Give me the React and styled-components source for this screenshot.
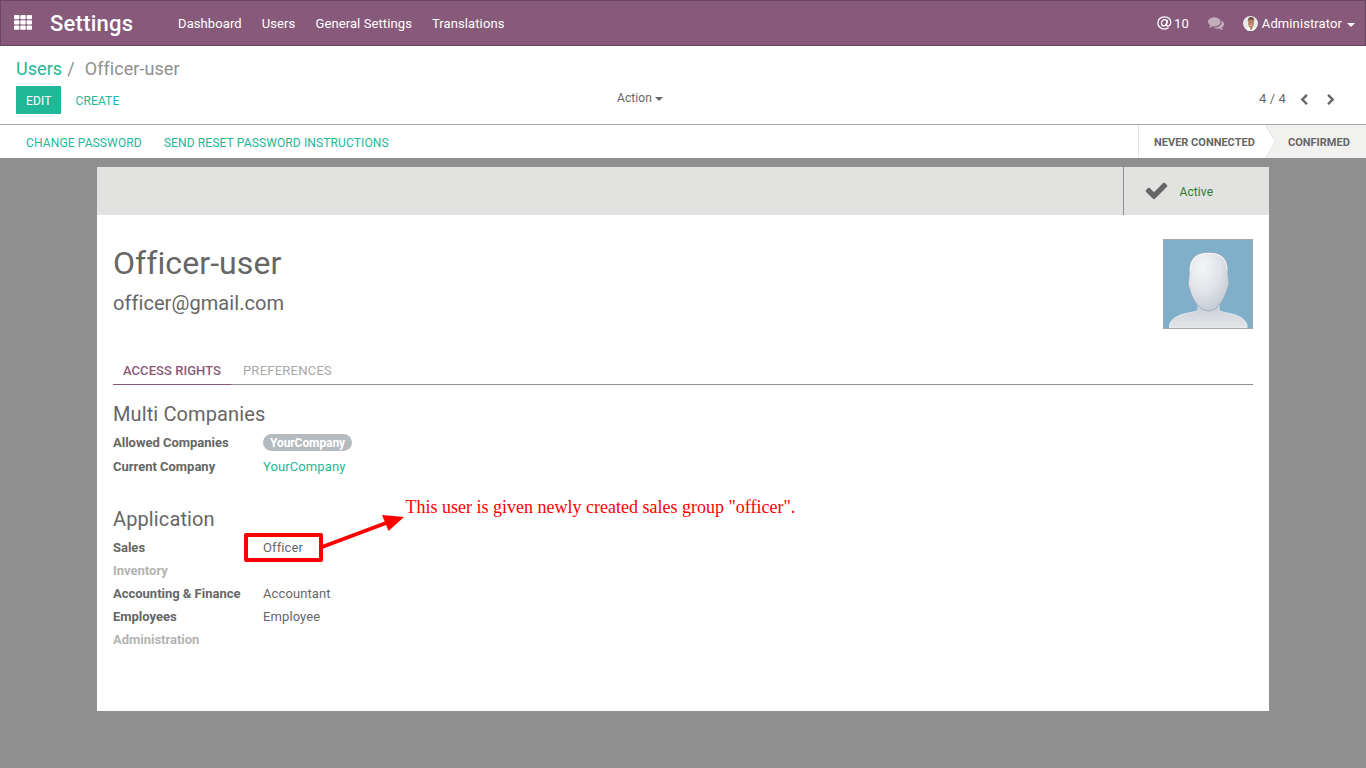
import React from "react";
import styled, { createGlobalStyle } from "styled-components";

const GlobalStyle = createGlobalStyle`
  * { box-sizing: border-box; }
  body {
    margin: 0;
    background: #8f8f8f;
    color: #666;
    font-family: Roboto, "Liberation Sans", sans-serif;
    font-size: 13px;
    line-height: 20px;
    letter-spacing: 0.1px;
    font-variant-ligatures: none;
    overflow: hidden;
  }
  svg { display: block; flex: none; }
`;

const Page = styled.div`
  height: 768px;
  display: flex;
  flex-direction: column;
`;

const Navbar = styled.header`
  height: 46px;
  flex: none;
  display: flex;
  align-items: center;
  justify-content: space-between;
  padding: 1px 10px 0 13px;
  background: #875a7b;
  border: 1px solid #68465f;
  color: #fff;
`;

const NavGroup = styled.nav`
  display: flex;
  align-items: center;
  gap: ${(p) => p.$gap}px;
`;

const IconSlot = styled.div`
  margin-bottom: ${(p) => p.$lift}px;
`;

const AppName = styled.div`
  width: 108px;
  margin-left: -2px;
  font-size: 22px;
  font-weight: 500;
  letter-spacing: 0.25px;
`;

const Caret = styled.span`
  border: 4px solid transparent;
  border-top-color: currentColor;
  border-bottom: 0;
  margin-top: ${(p) => p.$drop}px;
`;

const NavItem = styled.div`
  display: flex;
  align-items: center;
  gap: ${(p) => p.$gap || 0}px;
`;

const AccountName = styled.span`
  margin-right: 1px;
`;

const ControlPanel = styled.section`
  height: 79px;
  flex: none;
  display: grid;
  grid-template-columns: 601px 1fr auto;
  padding: 11px 29px 0 16px;
  background: #fff;
  border-bottom: 1px solid #a8a8a8;
`;

const Breadcrumb = styled.div`
  display: flex;
  font-size: 18px;
  line-height: 24px;
  letter-spacing: 0.06px;
  color: #8f8f8f;
`;

const Crumb = styled.a`
  color: #21b799;
  margin-right: 5px;
`;

const Separator = styled.span`
  margin-right: 10px;
`;

const Actions = styled.div`
  display: flex;
  gap: 4px;
  margin-top: 5px;
`;

const Button = styled.button`
  height: 28px;
  padding: 2px 10px 0;
  border: 0;
  font: 400 12px/20px Roboto, sans-serif;
  letter-spacing: 0.13px;
  color: ${(p) => (p.$primary ? "#fff" : "#21b799")};
  background: ${(p) => (p.$primary ? "#21b799" : "transparent")};
`;

const PanelItem = styled.div`
  height: 20px;
  margin-top: ${(p) => p.$top}px;
  font-size: ${(p) => p.$size || 13}px;
  display: flex;
  align-items: center;
  gap: ${(p) => p.$gap}px;
`;

const PagerArrows = styled.div`
  display: flex;
  gap: 15px;
  margin-top: 1px;
`;

const StatusBar = styled.section`
  height: 33px;
  flex: none;
  display: flex;
  justify-content: space-between;
  padding-left: 16px;
  background: #fff;
`;

const StatusButtons = styled.div`
  display: flex;
  gap: 2px;
  align-items: center;
`;

const Steps = styled.div`
  display: flex;
  border-left: 1px solid #e2e2e0;
  font-size: 11px;
  font-weight: 700;
  line-height: 35px;
  letter-spacing: 0;
`;

const Step = styled.div`
  display: flex;
  width: ${(p) => p.$width}px;
  padding-left: ${(p) => p.$indent}px;
  background: ${(p) => (p.$current ? "#f1f1f0" : "#fff")};
`;

const Sheet = styled.main`
  width: 1172px;
  height: 544px;
  margin: 9px 0 0 97px;
  background: #fff;
`;

const ButtonBox = styled.div`
  height: 48px;
  display: flex;
  justify-content: flex-end;
  background: #e2e2e0;
`;

const StatButton = styled.div`
  width: 146px;
  border-left: 1px solid #8f8f8f;
  padding-left: 19.5px;
  display: flex;
  align-items: center;
  gap: 11px;
  font-size: 12px;
  color: #2d7a2f;
`;

const StatText = styled.span`
  margin-top: 1px;
`;

const SheetBody = styled.div`
  padding: 24px 16px 0;
`;

const Identity = styled.div`
  height: 122px;
  display: flex;
  justify-content: space-between;
`;

const UserName = styled.h1`
  margin: 3px 0 0;
  font-size: 32px;
  line-height: 42px;
  font-weight: 400;
  letter-spacing: 0.08px;
`;

const UserLogin = styled.h2`
  margin: 6px 0 0;
  font-size: 20px;
  line-height: 26px;
  font-weight: 400;
  letter-spacing: 0.06px;
`;

const Photo = styled.div`
  width: 90px;
  height: 90px;
  border: 1px solid #a8a8a8;
`;

const Tabs = styled.div`
  display: flex;
  gap: 2px;
  height: 24px;
  border-bottom: 1px solid #8f8f8f;
`;

const Tab = styled.div`
  height: 24px;
  padding: 0 10px;
  font-weight: ${(p) => (p.$active ? 500 : 400)};
  letter-spacing: ${(p) => (p.$active ? 0.05 : 0.25)}px;
  color: ${(p) => (p.$active ? "#875a7b" : "#a8a8a8")};
  border-bottom: 1px solid ${(p) => (p.$active ? "#875a7b" : "transparent")};
`;

const GroupTitle = styled.h3`
  margin: ${(p) => p.$top}px 0 4px;
  font-size: 20px;
  line-height: 26px;
  font-weight: 400;
  letter-spacing: 0.12px;
`;

const Field = styled.div`
  display: grid;
  grid-template-columns: 150px auto;
  justify-content: start;
  align-items: center;
  height: ${(p) => p.$height || 23}px;
`;

const Label = styled.span`
  font-weight: 700;
  letter-spacing: -0.01px;
  color: ${(p) => (p.$muted ? "#b3b3b3" : "#666")};
`;

const Link = styled.a`
  color: #21b799;
`;

const Tag = styled.span`
  height: 17px;
  margin-bottom: 1px;
  padding: 0 7px;
  border-radius: 9px;
  background: #b5babf;
  color: #fff;
  font-size: 12px;
  font-weight: 700;
  line-height: 18px;
  letter-spacing: -0.08px;
`;

const Highlight = styled.div`
  position: absolute;
  left: 244px;
  top: 533px;
  width: 79px;
  height: 29px;
  border: 4px solid #f00;
  border-radius: 2px;
`;

const Arrow = styled.svg`
  position: absolute;
  left: 320px;
  top: 510px;
`;

const Note = styled.div`
  position: absolute;
  left: 405.5px;
  top: 496px;
  color: #f00;
  font: 18px/22px "Liberation Serif", serif;
  letter-spacing: 0;
  white-space: nowrap;
`;

const PATHS = {
  check:
    "M1671 566q0 40-28 68l-724 724-136 136q-28 28-68 28t-68-28l-136-136-362-362q-28-28-28-68t28-68l136-136q28-28 68-28t68 28l294 295 656-657q28-28 68-28t68 28l136 136q28 28 28 68z",
  left: "M1427 301l-531 531 531 531q19 19 19 45t-19 45l-166 166q-19 19-45 19t-45-19l-742-742q-19-19-19-45t19-45l742-742q19-19 45-19t45 19l166 166q19 19 19 45t-19 45z",
  right:
    "M1363 877l-742 742q-19 19-45 19t-45-19l-166-166q-19-19-19-45t19-45l531-531-531-531q-19-19-19-45t19-45l166-166q19-19 45-19t45 19l742 742q19 19 19 45t-19 45z",
  comments:
    "M1408 768q0 139-94 257t-256.5 186.5-353.5 68.5q-86 0-176-16-124 88-278 128-36 9-86 16h-3q-11 0-20.5-8t-11.5-21q-1-3-1-6.5t.5-6.5 2-6l2.5-5 3.5-5.5 4-5 4.5-5 4-4.5q5-6 23-25t26-29.5 22.5-29 25-38.5 20.5-44q-124-72-195-177t-71-224q0-139 94-257t256.5-186.5 353.5-68.5 353.5 68.5 256.5 186.5 94 257zm384 256q0 120-71 224.5t-195 176.5q10 24 20.5 44t25 38.5 22.5 29 26 29.5 23 25q1 1 4 4.500t4.500 5 4 5 3.500 5.500l2.500 5 2 6 .5 6.500-1 6.500q-3 14-13 22t-22 7q-50-7-86-16-154-40-278-128-90 16-176 16-271 0-472-132 58 4 88 4 161 0 309-45t264-129q125-92 192-212t67-254q0-77-23-152 129 71 204 178t75 230z",
};

const Icon = ({ name, size, color = "currentColor", opacity }) => (
  <svg width={size} height={size} viewBox="0 0 1792 1792" fill={color} opacity={opacity}>
    <path d={PATHS[name]} />
  </svg>
);

const AppsIcon = () => (
  <svg width="18" height="15" viewBox="0 0 18 15" fill="#fff">
    {[0, 5.3, 10.6].map((y) =>
      [0, 6.3, 12.6].map((x) => (
        <rect key={`${x}-${y}`} x={x} y={y} width="5.4" height="4.2" rx="0.9" />
      ))
    )}
  </svg>
);

const AtIcon = () => (
  <svg width="15" height="14" viewBox="0 0 15 14" fill="none" stroke="#fff" strokeWidth="1.3">
    <path d="M11.600 11.600C10.400 12.600 9 13.100 7.300 13.100 3.700 13.100.9 10.400.9 6.900S3.700.8 7.500.8c3.700 0 6.200 2.200 6.200 5.300 0 2.400-1.400 4-3 4-1 0-1.300-.6-1.100-1.500l.9-4.700" />
    <path d="M9.800 6.200c-.3 2.200-1.500 3.700-3.200 3.700-1.300 0-2.100-.9-2.100-2.300 0-2.200 1.400-4 3.200-4 1.400 0 2.300.9 2.100 2.600z" />
  </svg>
);

const AdminFace = () => (
  <svg width="15" height="15" viewBox="0 0 15 15">
    <defs>
      <clipPath id="face">
        <circle cx="7.5" cy="7.5" r="7.5" />
      </clipPath>
    </defs>
    <g clipPath="url(#face)">
      <rect width="15" height="15" fill="#e8ebe9" />
      <path d="M2.500 15l3-4 2.500 2 2.500-2.500L13 15z" fill="#fff" />
      <path d="M6.500 10.500h3.500l-.8 3-1.800.6z" fill="#b98970" />
      <ellipse cx="8" cy="6.800" rx="2.900" ry="4.700" fill="#b98068" />
      <path d="M4.900 6C4.500 2.500 5.800 1 8.100 1s3.600 1.800 3 5l-.8-2.200H5.900z" fill="#6b5148" />
      <path d="M6.700 9.300h2.600" stroke="#f3dfd6" strokeWidth=".7" />
    </g>
  </svg>
);

const Silhouette = () => (
  <svg width="88" height="88" viewBox="0 0 88 88">
    <defs>
      <radialGradient id="head" cx=".35" cy=".25" r=".8">
        <stop offset="0" stopColor="#f4f5f7" />
        <stop offset=".55" stopColor="#e0e3e8" />
        <stop offset="1" stopColor="#c2c7d1" />
      </radialGradient>
      <linearGradient id="body" x1="0" y1="0" x2="0" y2="1">
        <stop offset="0" stopColor="#b9bfca" />
        <stop offset=".5" stopColor="#d5d9df" />
        <stop offset="1" stopColor="#e3e5e9" />
      </linearGradient>
    </defs>
    <rect width="88" height="88" fill="#7fafc9" />
    <path
      d="M5.500 88v-3c1-5 7-9 14-11 6-1.500 12-2 14.500-3.500V61h21v9.500c3 2 9 2.500 15 4 6 1.700 12 5.500 13 10.500v3z"
      fill="url(#body)"
      stroke="#edf0f3"
      strokeWidth=".8"
    />
    <path
      d="M45 12.500c12 0 18.500 5 18.800 17 .1 5 .1 7 .7 9 1 4 .2 8-1 10C61 59 53 71 44.500 71S28 60 25.700 49c-1.500-3-1.700-7-.8-10 .5-2 .3-5 .4-8 .5-14 7.500-18.500 19.700-18.500z"
      fill="url(#head)"
      stroke="#8d9bb0"
      strokeWidth=".6"
    />
    <path d="M26 31c.4-13 7-17.700 19-17.700 11 0 17.300 4 18.200 17" fill="none" stroke="#fff" strokeWidth=".7" />
  </svg>
);

const MENU = ["Dashboard", "Users", "General Settings", "Translations"];

const RIGHTS = [
  { label: "Sales", value: "Officer" },
  { label: "Inventory" },
  { label: "Accounting & Finance", value: "Accountant" },
  { label: "Employees", value: "Employee" },
  { label: "Administration" },
];

export default function App() {
  return (
    <Page>
      <GlobalStyle />
      <Navbar>
        <NavGroup $gap={20}>
          <IconSlot $lift={3}>
            <AppsIcon />
          </IconSlot>
          <AppName>Settings</AppName>
          {MENU.map((item) => (
            <NavItem key={item}>{item}</NavItem>
          ))}
        </NavGroup>
        <NavGroup $gap={19}>
          <NavItem $gap={2}>
            <IconSlot $lift={2}>
              <AtIcon />
            </IconSlot>
            10
          </NavItem>
          <IconSlot $lift={2}>
            <Icon name="comments" size={16} opacity={0.5} />
          </IconSlot>
          <NavItem $gap={4}>
            <AdminFace />
            <AccountName>Administrator</AccountName>
            <Caret $drop={3} />
          </NavItem>
        </NavGroup>
      </Navbar>

      <ControlPanel>
        <div>
          <Breadcrumb>
            <Crumb>Users</Crumb>
            <Separator>/</Separator>
            <span>Officer-user</span>
          </Breadcrumb>
          <Actions>
            <Button $primary>EDIT</Button>
            <Button>CREATE</Button>
          </Actions>
        </div>
        <PanelItem $top={31} $gap={3} $size={12}>
          Action
          <Caret $drop={2} />
        </PanelItem>
        <PanelItem $top={32} $gap={12}>
          4 / 4
          <PagerArrows>
            <Icon name="left" size={12} />
            <Icon name="right" size={12} />
          </PagerArrows>
        </PanelItem>
      </ControlPanel>

      <StatusBar>
        <StatusButtons>
          <Button>CHANGE PASSWORD</Button>
          <Button>SEND RESET PASSWORD INSTRUCTIONS</Button>
        </StatusButtons>
        <Steps>
          <Step $width={126} $indent={15}>NEVER CONNECTED</Step>
          <Step $current $width={101} $indent={0}>
            <svg width="23" height="33" viewBox="0 0 23 33">
              <path d="M0 0h1l10 16.500L1 33H0z" fill="#fff" />
              <path d="M.5 0l10 16.500L.5 33" fill="none" stroke="#dededc" />
            </svg>
            CONFIRMED
          </Step>
        </Steps>
      </StatusBar>

      <Sheet>
        <ButtonBox>
          <StatButton>
            <IconSlot $lift={2}>
              <Icon name="check" size={25} color="#666" />
            </IconSlot>
            <StatText>Active</StatText>
          </StatButton>
        </ButtonBox>
        <SheetBody>
          <Identity>
            <div>
              <UserName>Officer-user</UserName>
              <UserLogin>officer@gmail.com</UserLogin>
            </div>
            <Photo>
              <Silhouette />
            </Photo>
          </Identity>
          <Tabs>
            <Tab $active>ACCESS RIGHTS</Tab>
            <Tab>PREFERENCES</Tab>
          </Tabs>
          <GroupTitle $top={16}>Multi Companies</GroupTitle>
          <Field $height={24}>
            <Label>Allowed Companies</Label>
            <Tag>YourCompany</Tag>
          </Field>
          <Field $height={24}>
            <Label>Current Company</Label>
            <Link>YourCompany</Link>
          </Field>
          <GroupTitle $top={27}>Application</GroupTitle>
          {RIGHTS.map(({ label, value }) => (
            <Field key={label}>
              <Label $muted={!value}>{label}</Label>
              {value && <span>{value}</span>}
            </Field>
          ))}
        </SheetBody>
      </Sheet>

      <Highlight />
      <Arrow width="86" height="42" viewBox="0 0 86 42">
        <path d="M2 37L66 13" stroke="#f00" strokeWidth="4" />
        <path d="M84 7L62 5l6.500 16z" fill="#f00" />
      </Arrow>
      <Note>This user is given newly created sales group "officer".</Note>
    </Page>
  );
}
